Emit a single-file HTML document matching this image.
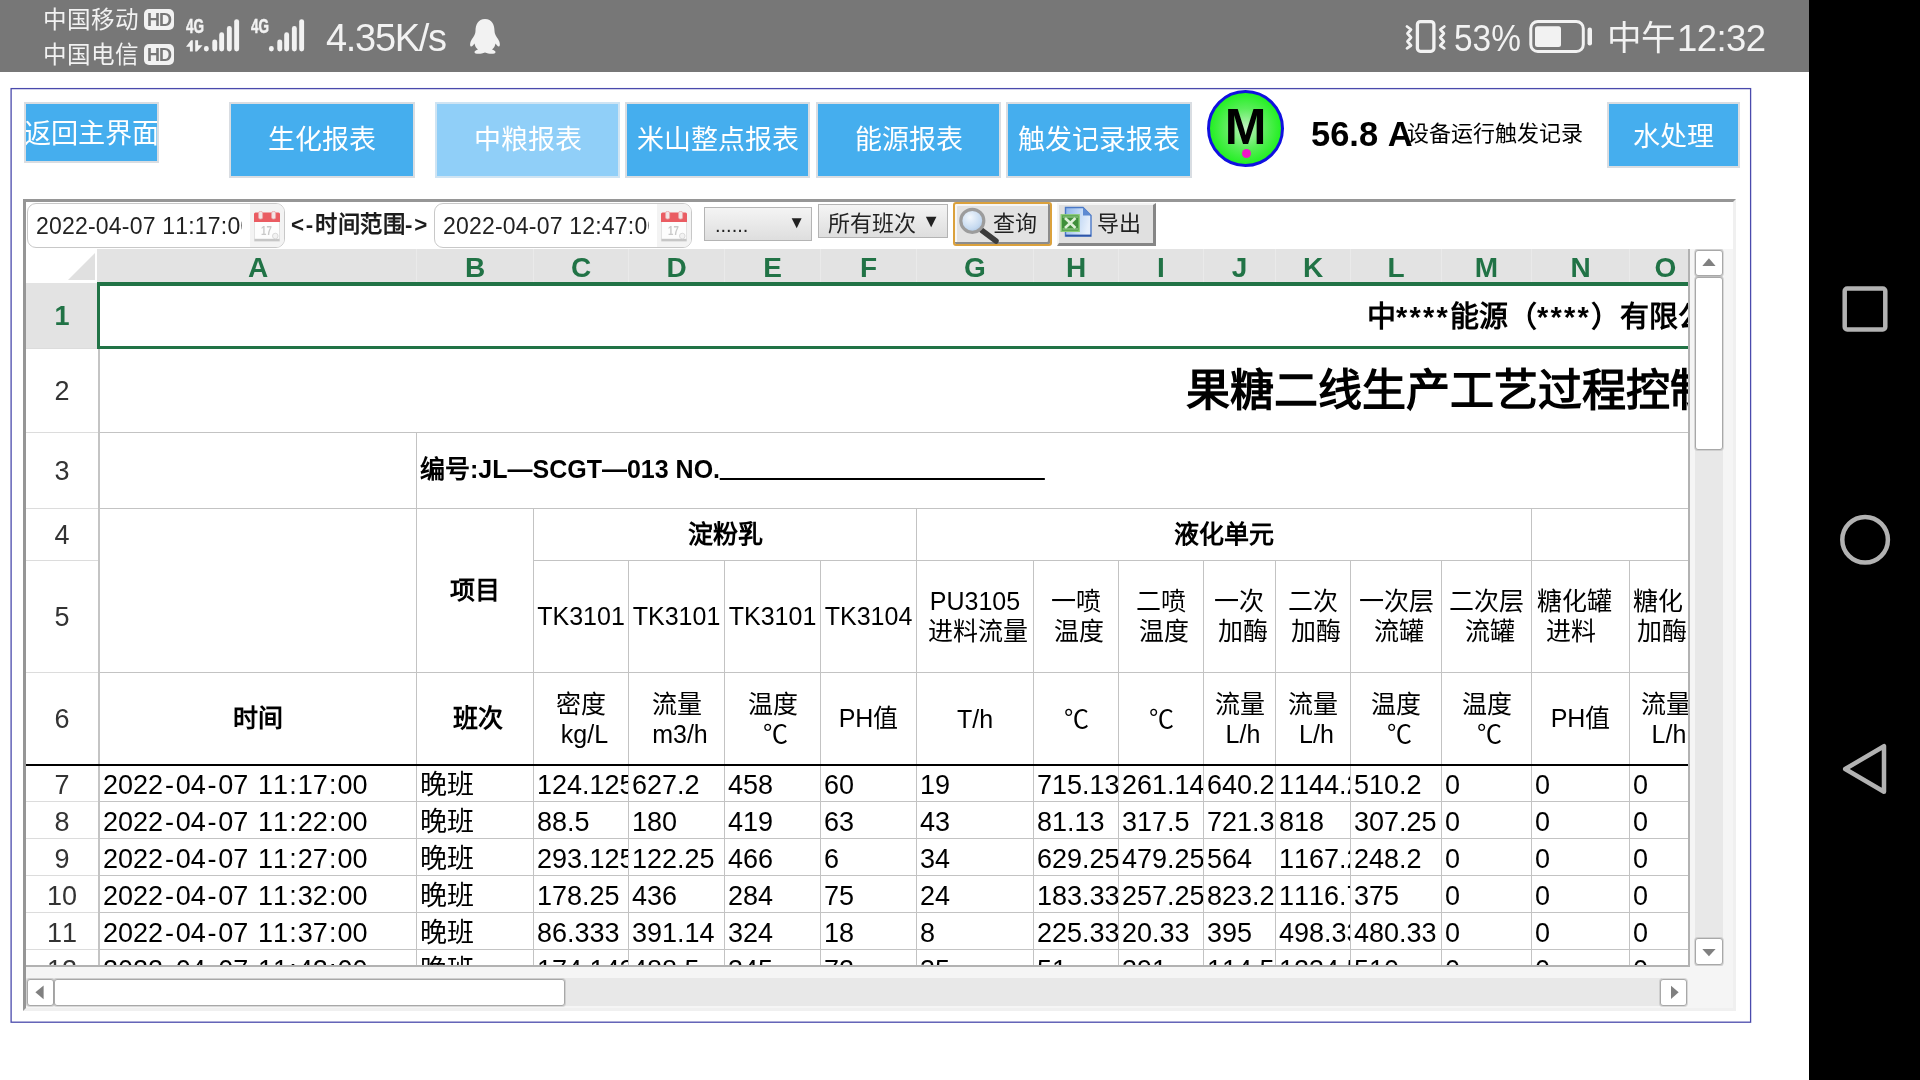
<!DOCTYPE html><html lang="zh-CN"><head><meta charset="utf-8"><title>report</title><style>
*{box-sizing:border-box}
html,body{margin:0;padding:0}
body{font-kerning:none;width:1920px;height:1080px;position:relative;overflow:hidden;background:#fff;will-change:transform;font-family:"Liberation Sans",sans-serif;color:#000}
.abs{position:absolute}
#status{left:0;top:0;width:1809px;height:72px;background:#777;color:#f2f2f2}
#nav{left:1809px;top:0;width:111px;height:1080px;background:#000}
#frame{left:10px;top:88px;width:1741px;height:935px;border:1px solid #5b5bd6}
.btn{background:#45aeee;border:2px solid #d9dde2;color:#fff;font-size:27px;display:flex;align-items:center;justify-content:center;padding-bottom:6px;text-align:center;white-space:nowrap;overflow:hidden}
#inner{left:23px;top:199px;width:1713px;height:812px;border-top:3px solid #969696;border-left:3px solid #969696;border-right:3px solid #f0f0f0;border-bottom:3px solid #f0f0f0}
.inp{height:45px;border:1px solid #c8c8c8;border-radius:9px;background:#fff;font-size:23px;line-height:44px;padding-left:8px;letter-spacing:0.2px;overflow:hidden;white-space:nowrap;color:#222}
#grid{left:26px;top:249px;width:1662px;height:716px;overflow:hidden;background:#fff}
.c{position:absolute;overflow:hidden;white-space:nowrap;font-size:27px;display:flex;align-items:center}
.hc{position:absolute;top:0;height:34px;background:#e3e3e3;color:#217346;font-weight:bold;font-size:28px;text-align:center;line-height:38px;border-right:1px solid #eaeaea}
.rh{position:absolute;left:0;width:72px;text-align:center;font-size:27px;color:#333;display:flex;align-items:center;justify-content:center}
.vl{position:absolute;width:1px;background:#c3c3c3}
.hl{position:absolute;height:1px;background:#c3c3c3}
.ctr{justify-content:center;text-align:center}
i{font-style:normal}
.hy{margin:0 1.8px}
.co{margin:0 1.1px}
.b{font-weight:bold}
.h2{font-size:25px;line-height:30px;white-space:normal}
</style></head><body>
<div id="status" class="abs">
<div class="abs" style="left:43px;top:6px;font-size:23.6px;line-height:28px;white-space:nowrap">中国移动</div>
<div class="abs" style="left:43px;top:41px;font-size:23.6px;line-height:28px;white-space:nowrap">中国电信</div>
<div class="abs" style="left:144px;top:9px;width:30px;height:21px;border-radius:5px;background:#f2f2f2;color:#777;font-size:18px;font-weight:bold;line-height:23px;text-align:center;letter-spacing:-1px">HD</div>
<div class="abs" style="left:144px;top:44px;width:30px;height:21px;border-radius:5px;background:#f2f2f2;color:#777;font-size:18px;font-weight:bold;line-height:23px;text-align:center;letter-spacing:-1px">HD</div>
<svg class="abs" style="left:186px;top:17px" width="56" height="38" viewBox="0 0 56 38"><text x="0" y="16.2" font-family="Liberation Sans" font-weight="bold" font-size="19.5" fill="#f2f2f2" stroke="#f2f2f2" stroke-width="0.5" textLength="18" lengthAdjust="spacingAndGlyphs">4G</text><path d="M6.8 23.3 L6.8 34.5 L3.9 34.5 L3.9 29.8 L0 29.8 L5 23.3 Z M9.2 34.5 L9.2 23.3 L12.1 23.3 L12.1 28.2 L16.6 28.2 L11 34.5Z" fill="#f2f2f2"/><rect x="17.9" y="29" width="4.9" height="5.5" rx="2.4" fill="#f2f2f2"/><rect x="26.3" y="22.6" width="4.9" height="11.9" rx="2.4" fill="#f2f2f2"/><rect x="33.2" y="15.3" width="4.9" height="19.2" rx="2.4" fill="#f2f2f2"/><rect x="40.9" y="9" width="4.9" height="25.5" rx="2.4" fill="#f2f2f2"/><rect x="48.2" y="2.2" width="4.9" height="32.3" rx="2.4" fill="#f2f2f2"/></svg>
<svg class="abs" style="left:251px;top:17px" width="56" height="38" viewBox="0 0 56 38"><text x="0" y="16.2" font-family="Liberation Sans" font-weight="bold" font-size="19.5" fill="#f2f2f2" stroke="#f2f2f2" stroke-width="0.5" textLength="18" lengthAdjust="spacingAndGlyphs">4G</text><rect x="17.9" y="29" width="4.9" height="5.5" rx="2.4" fill="#f2f2f2"/><rect x="26.3" y="22.6" width="4.9" height="11.9" rx="2.4" fill="#f2f2f2"/><rect x="33.2" y="15.3" width="4.9" height="19.2" rx="2.4" fill="#f2f2f2"/><rect x="40.9" y="9" width="4.9" height="25.5" rx="2.4" fill="#f2f2f2"/><rect x="48.2" y="2.2" width="4.9" height="32.3" rx="2.4" fill="#f2f2f2"/></svg>
<div class="abs" style="left:326px;top:15px;font-size:38px;line-height:46px;white-space:nowrap;letter-spacing:-1.3px;color:#f2f2f2">4.35K/s</div>
<svg class="abs" style="left:469px;top:19px" width="32" height="36" viewBox="0 0 32 36"><path d="M16 0 C9 0 6.5 6 6.5 12 C6.5 15 5 17 3 20 C1 23 0.5 27 2 27.5 C3 27.8 4.5 26 5.5 24.5 C6 27 7 29 9 30.5 C7 31.2 5.5 32 5.5 33.2 C5.5 35.2 12 35.2 16 33.5 C20 35.2 26.5 35.2 26.5 33.2 C26.5 32 25 31.2 23 30.5 C25 29 26 27 26.5 24.5 C27.5 26 29 27.8 30 27.5 C31.5 27 31 23 29 20 C27 17 25.5 15 25.5 12 C25.5 6 23 0 16 0Z" fill="#f2f2f2"/></svg>
<svg class="abs" style="left:1400px;top:16px" width="52" height="42" viewBox="0 0 52 42" fill="none" stroke="#f2f2f2" stroke-linejoin="round" stroke-linecap="round"><rect x="17.4" y="5.6" width="16.5" height="29.7" rx="3" stroke-width="3.3"/><path d="M7 10.5 L11 13.5 L7.5 17.5 L11 21.5 L7.5 25.5 L11 29.5 L7 32.3 M44.3 10.5 L40.3 13.5 L43.8 17.5 L40.3 21.5 L43.8 25.5 L40.3 29.5 L44.3 32.3" stroke-width="2.8"/></svg>
<div class="abs" style="left:1454px;top:16px;font-size:36.5px;line-height:46px;white-space:nowrap;transform:scaleX(.915);transform-origin:0 0;color:#f2f2f2">53%</div>
<svg class="abs" style="left:1526px;top:16px" width="70" height="42" viewBox="0 0 70 42"><rect x="4.8" y="5.5" width="52.5" height="30" rx="7" fill="none" stroke="#f2f2f2" stroke-width="3"/><rect x="9" y="10.2" width="26" height="20.8" rx="2.5" fill="#f2f2f2"/><rect x="61.5" y="11.5" width="4.5" height="18" rx="2.2" fill="#f2f2f2"/></svg>
<div class="abs" style="left:1607px;top:14.5px;line-height:48px;white-space:nowrap;color:#f2f2f2"><span style="font-size:34.5px;position:relative;top:-1px">中午</span><span style="font-size:36.5px;letter-spacing:-0.6px;margin-left:2px">12:32</span></div>
</div>
<div id="nav" class="abs">
<svg class="abs" style="left:0;top:0" width="111" height="1080" viewBox="0 0 111 1080" fill="none" stroke="#b2b2b2" stroke-width="4.5" stroke-linejoin="round"><rect x="35.7" y="288.5" width="40.6" height="41" rx="2.5"/><circle cx="56.1" cy="539.8" r="22.8"/><path d="M75 746.2 L75 791.8 L36.2 769 Z"/></svg>
</div>
<svg class="abs" style="left:0;top:0" width="1920" height="1080"><rect x="11.1" y="88.6" width="1739.5" height="933.6" fill="none" stroke="#4a4aac" stroke-width="1.3"/></svg>
<div class="abs btn" style="left:24px;top:102px;width:135px;height:61px;font-size:27.2px;padding-bottom:4px;"><span style="flex:none">返回主界面</span></div>
<div class="abs btn" style="left:229px;top:102px;width:186px;height:76px;"><span style="flex:none">生化报表</span></div>
<div class="abs btn" style="left:435px;top:102px;width:185px;height:76px;background:#90cff8;border-color:#cfe4f3;"><span style="flex:none">中粮报表</span></div>
<div class="abs btn" style="left:625px;top:102px;width:185px;height:76px;"><span style="flex:none">米山整点报表</span></div>
<div class="abs btn" style="left:816px;top:102px;width:185px;height:76px;"><span style="flex:none">能源报表</span></div>
<div class="abs btn" style="left:1006px;top:102px;width:186px;height:76px;"><span style="flex:none">触发记录报表</span></div>
<div class="abs btn" style="left:1607px;top:102px;width:133px;height:66px;padding-bottom:1px;"><span style="flex:none">水处理</span></div>
<div class="abs" style="left:1207px;top:90px;width:77px;height:77px;border-radius:50%;background:radial-gradient(circle at 50% 50%,#c4f2c4 0%,#5aee5a 40%,#1cf01c 75%);border:3.5px solid #1010e0"></div>
<div class="abs b" style="left:1207px;top:92px;width:77px;height:70px;font-size:50px;line-height:70px;text-align:center">M</div>
<div class="abs" style="left:1241.5px;top:148.5px;width:9px;height:9px;border-radius:50%;background:#f216c8"></div>
<div class="abs b" style="left:1311px;top:114px;font-size:34.5px;line-height:40px;white-space:nowrap">56.8 A</div>
<div class="abs" style="left:1407px;top:120px;font-size:22px;line-height:28px;white-space:nowrap">设备运行触发记录</div>
<div id="inner" class="abs"></div>
<div class="abs inp" style="left:27px;top:203px;width:258px">2022-04-07 11:17:00<div class="abs" style="right:0;top:0;width:34px;height:43px;background:#f3f3f3;border-left:8px solid #fff;box-sizing:content-box"></div><svg class="abs" style="right:4px;top:7px" width="26" height="31" viewBox="0 0 26 31"><rect x="0.5" y="10" width="25" height="20" fill="#fdfdfd" stroke="#e2e2e2"/><rect x="0.5" y="27.8" width="25" height="2.4" fill="#c6c6c6"/><path d="M0 3 a1.5 1.5 0 0 1 1.5 -1.5 h23 a1.5 1.5 0 0 1 1.5 1.5 v8 h-26z" fill="#ea5c62"/><rect x="4.6" y="0.4" width="4" height="7.6" rx="1.6" fill="#f3e6e6" stroke="#eaa6a8" stroke-width="0.8"/><rect x="17.6" y="0.4" width="4" height="7.6" rx="1.6" fill="#f3e6e6" stroke="#eaa6a8" stroke-width="0.8"/><text x="7" y="24" font-size="12" font-weight="bold" font-family="Liberation Sans" fill="#c9c9c9" textLength="11" lengthAdjust="spacingAndGlyphs">17</text><circle cx="21.3" cy="25" r="2.8" fill="#f2f2f2" stroke="#d6d6d6" stroke-width="0.9"/></svg></div>
<div class="abs b" style="left:291px;top:210px;font-size:22.3px;line-height:30px;white-space:nowrap;letter-spacing:0.5px;color:#1c1c1c"><span style="letter-spacing:1.8px">&lt;-</span>时间范围<span style="letter-spacing:1.8px">-&gt;</span></div>
<div class="abs inp" style="left:434px;top:203px;width:258px">2022-04-07 12:47:00<div class="abs" style="right:0;top:0;width:34px;height:43px;background:#f3f3f3;border-left:8px solid #fff;box-sizing:content-box"></div><svg class="abs" style="right:4px;top:7px" width="26" height="31" viewBox="0 0 26 31"><rect x="0.5" y="10" width="25" height="20" fill="#fdfdfd" stroke="#e2e2e2"/><rect x="0.5" y="27.8" width="25" height="2.4" fill="#c6c6c6"/><path d="M0 3 a1.5 1.5 0 0 1 1.5 -1.5 h23 a1.5 1.5 0 0 1 1.5 1.5 v8 h-26z" fill="#ea5c62"/><rect x="4.6" y="0.4" width="4" height="7.6" rx="1.6" fill="#f3e6e6" stroke="#eaa6a8" stroke-width="0.8"/><rect x="17.6" y="0.4" width="4" height="7.6" rx="1.6" fill="#f3e6e6" stroke="#eaa6a8" stroke-width="0.8"/><text x="7" y="24" font-size="12" font-weight="bold" font-family="Liberation Sans" fill="#c9c9c9" textLength="11" lengthAdjust="spacingAndGlyphs">17</text><circle cx="21.3" cy="25" r="2.8" fill="#f2f2f2" stroke="#d6d6d6" stroke-width="0.9"/></svg></div>
<div class="abs" style="left:704px;top:207px;width:108px;height:34px;background:linear-gradient(#f4f4f4,#dedede);border:1px solid #b4b4b4;font-size:20px;line-height:34px;padding-left:10px;color:#222">......<span class="abs" style="right:6px;top:-2px;font-size:17px">&#9660;</span></div>
<div class="abs" style="left:818px;top:204px;width:130px;height:34px;background:linear-gradient(#f4f4f4,#dedede);border:1px solid #b4b4b4;font-size:22px;line-height:32px;padding-top:2.5px;padding-left:9px;color:#222;white-space:nowrap">所有班次<span class="abs" style="right:7px;top:0px;font-size:18px">&#9660;</span></div>
<div class="abs" style="left:953px;top:202px;width:99px;height:44px;background:#e2e2e2;border:2px solid #dba13c;border-radius:3px;box-shadow:inset -2px -2px 0 #8c8c8c, inset 2px 2px 0 #f6f6f6"></div>
<svg class="abs" style="left:957px;top:205px" width="42" height="40" viewBox="0 0 42 40"><defs><radialGradient id="lg" cx="0.4" cy="0.35" r="0.7"><stop offset="0" stop-color="#f2f7fc"/><stop offset="0.7" stop-color="#c6daf0"/><stop offset="1" stop-color="#aac4e2"/></radialGradient></defs><line x1="25" y1="25.5" x2="39" y2="36" stroke="#3c3c3c" stroke-width="5.5" stroke-linecap="round"/><circle cx="15.3" cy="15.8" r="11.5" fill="url(#lg)" stroke="#9c9c9c" stroke-width="3.2"/></svg>
<div class="abs" style="left:993px;top:209px;font-size:22px;line-height:30px;color:#222;white-space:nowrap">查询</div>
<div class="abs" style="left:1057px;top:203px;width:99px;height:43px;background:#e0e0e0;border-style:solid;border-width:2px 3px 3px 2px;border-color:#f4f4f4 #868686 #868686 #f4f4f4"></div>
<svg class="abs" style="left:1060px;top:205px" width="34" height="34" viewBox="0 0 34 34"><defs><linearGradient id="dg" x1="0" y1="0" x2="1" y2="0.3"><stop offset="0" stop-color="#8db3ea"/><stop offset="0.6" stop-color="#c5daf5"/><stop offset="1" stop-color="#e6effb"/></linearGradient></defs><path d="M5.5 2.5 h17.5 l8 8 v20.5 h-25.5z" fill="url(#dg)" stroke="#4a78c6" stroke-width="1.4"/><path d="M23 2.5 v8 h8z" fill="#5c8ad2"/><path d="M5.5 30.5 h25.5" stroke="#2e55a8" stroke-width="1.8"/><rect x="1.2" y="9.8" width="18" height="16.5" fill="#3f8f3a" stroke="#8ccc78" stroke-width="1.4"/><path d="M5 13 L15.5 23 M15.5 13 L5 23" stroke="#dff0d8" stroke-width="2.6"/><path d="M2.5 12 h15.5 M2.5 24 h15.5" stroke="#a8d89a" stroke-width="1"/></svg>
<div class="abs" style="left:1097px;top:209px;font-size:22px;line-height:30px;color:#222;white-space:nowrap">导出</div>
<div id="grid" class="abs">
<div class="abs" style="left:71px;top:0;width:1592px;height:34px;background:#e3e3e3"></div>
<div class="hc" style="left:74px;width:317px">A</div>
<div class="hc" style="left:391px;width:117px">B</div>
<div class="hc" style="left:508px;width:95px">C</div>
<div class="hc" style="left:603px;width:96px">D</div>
<div class="hc" style="left:699px;width:96px">E</div>
<div class="hc" style="left:795px;width:96px">F</div>
<div class="hc" style="left:891px;width:117px">G</div>
<div class="hc" style="left:1008px;width:85px">H</div>
<div class="hc" style="left:1093px;width:85px">I</div>
<div class="hc" style="left:1178px;width:72px">J</div>
<div class="hc" style="left:1250px;width:75px">K</div>
<div class="hc" style="left:1325px;width:91px">L</div>
<div class="hc" style="left:1416px;width:90px">M</div>
<div class="hc" style="left:1506px;width:98px">N</div>
<div class="hc" style="left:1604px;width:72px">O</div>
<svg class="abs" style="left:0;top:0" width="71" height="34" viewBox="0 0 71 34"><path d="M69 4 L69 31 L42 31Z" fill="#e0e0e0"/></svg>
<div class="rh" style="top:34px;height:66px;background:#e3e3e3;color:#217346;font-weight:bold;">1</div>
<div class="hl" style="left:0;top:99px;width:72px;background:#dcdcdc"></div>
<div class="rh" style="top:100px;height:84px;">2</div>
<div class="hl" style="left:0;top:183px;width:72px;background:#dcdcdc"></div>
<div class="rh" style="top:184px;height:76px;">3</div>
<div class="hl" style="left:0;top:259px;width:72px;background:#dcdcdc"></div>
<div class="rh" style="top:260px;height:52px;">4</div>
<div class="hl" style="left:0;top:311px;width:72px;background:#dcdcdc"></div>
<div class="rh" style="top:312px;height:112px;">5</div>
<div class="hl" style="left:0;top:423px;width:72px;background:#dcdcdc"></div>
<div class="rh" style="top:424px;height:92px;">6</div>
<div class="hl" style="left:0;top:515px;width:72px;background:#dcdcdc"></div>
<div class="rh" style="top:516px;height:37px;padding-top:3px;">7</div>
<div class="hl" style="left:0;top:552px;width:72px;background:#dcdcdc"></div>
<div class="rh" style="top:553px;height:37px;padding-top:3px;">8</div>
<div class="hl" style="left:0;top:589px;width:72px;background:#dcdcdc"></div>
<div class="rh" style="top:590px;height:37px;padding-top:3px;">9</div>
<div class="hl" style="left:0;top:626px;width:72px;background:#dcdcdc"></div>
<div class="rh" style="top:627px;height:37px;padding-top:3px;">10</div>
<div class="hl" style="left:0;top:663px;width:72px;background:#dcdcdc"></div>
<div class="rh" style="top:664px;height:37px;padding-top:3px;">11</div>
<div class="hl" style="left:0;top:700px;width:72px;background:#dcdcdc"></div>
<div class="rh" style="top:701px;height:37px;padding-top:3px;">12</div>
<div class="hl" style="left:0;top:737px;width:72px;background:#dcdcdc"></div>
<div class="vl" style="left:72px;top:34px;height:700px;width:2px;background:#c4c4c4"></div>
<div class="hl" style="left:73px;top:183px;width:1603px;height:1px;"></div>
<div class="hl" style="left:73px;top:259px;width:1603px;height:1px;"></div>
<div class="hl" style="left:507px;top:311px;width:1169px;height:1px;"></div>
<div class="hl" style="left:73px;top:423px;width:1603px;height:1px;"></div>
<div class="hl" style="left:73px;top:552px;width:1603px;height:1px;"></div>
<div class="hl" style="left:73px;top:589px;width:1603px;height:1px;"></div>
<div class="hl" style="left:73px;top:626px;width:1603px;height:1px;"></div>
<div class="hl" style="left:73px;top:663px;width:1603px;height:1px;"></div>
<div class="hl" style="left:73px;top:700px;width:1603px;height:1px;"></div>
<div class="hl" style="left:73px;top:737px;width:1603px;height:1px;"></div>
<div class="vl" style="left:390px;top:183px;height:555px"></div>
<div class="vl" style="left:507px;top:259px;height:479px"></div>
<div class="vl" style="left:602px;top:311px;height:427px"></div>
<div class="vl" style="left:698px;top:311px;height:427px"></div>
<div class="vl" style="left:794px;top:311px;height:427px"></div>
<div class="vl" style="left:890px;top:259px;height:479px"></div>
<div class="vl" style="left:1007px;top:311px;height:427px"></div>
<div class="vl" style="left:1092px;top:311px;height:427px"></div>
<div class="vl" style="left:1177px;top:311px;height:427px"></div>
<div class="vl" style="left:1249px;top:311px;height:427px"></div>
<div class="vl" style="left:1324px;top:311px;height:427px"></div>
<div class="vl" style="left:1415px;top:311px;height:427px"></div>
<div class="vl" style="left:1505px;top:259px;height:479px"></div>
<div class="vl" style="left:1603px;top:311px;height:427px"></div>
<div class="c b" style="left:74px;top:34px;width:1601px;height:65px;font-size:29px;"><span style="position:absolute;left:1267px;top:10px">中<span style="letter-spacing:2.2px">****</span>能源（<span style="letter-spacing:2.2px">****</span>）有限公司</span></div>
<div class="c b" style="left:74px;top:100px;width:1601px;height:83px;font-size:44px;"><span style="position:absolute;left:1086px;top:6px">果糖二线生产工艺过程控制记录</span></div>
<div class="c b" style="left:391px;top:184px;width:1284px;height:75px;font-size:25px;padding-left:3px;padding-bottom:7px;">编号:JL—SCGT—013 NO.<span style="letter-spacing:-0.4px;text-shadow:0 0.8px 0 #000">________________________</span></div>
<div class="c b ctr" style="left:391px;top:260px;width:116px;height:163px;font-size:25px;padding-bottom:6px;">项目</div>
<div class="c b ctr" style="left:508px;top:260px;width:382px;height:51px;font-size:25px;padding-bottom:6px;">淀粉乳</div>
<div class="c b ctr" style="left:891px;top:260px;width:614px;height:51px;font-size:25px;padding-bottom:6px;">液化单元</div>
<div class="c ctr h2" style="left:508px;top:312px;width:94px;height:111px;padding-bottom:2px;"><span>TK3101</span></div>
<div class="c ctr h2" style="left:603px;top:312px;width:95px;height:111px;padding-bottom:2px;"><span>TK3101</span></div>
<div class="c ctr h2" style="left:699px;top:312px;width:95px;height:111px;padding-bottom:2px;"><span>TK3101</span></div>
<div class="c ctr h2" style="left:795px;top:312px;width:95px;height:111px;padding-bottom:2px;"><span>TK3104</span></div>
<div class="c ctr h2" style="left:891px;top:312px;width:116px;height:111px;padding-bottom:2px;"><span>PU3105<br>&nbsp;进料流量</span></div>
<div class="c ctr h2" style="left:1008px;top:312px;width:84px;height:111px;padding-bottom:2px;"><span>一喷<br>&nbsp;温度</span></div>
<div class="c ctr h2" style="left:1093px;top:312px;width:84px;height:111px;padding-bottom:2px;"><span>二喷<br>&nbsp;温度</span></div>
<div class="c ctr h2" style="left:1178px;top:312px;width:71px;height:111px;padding-bottom:2px;"><span>一次<br>&nbsp;加酶</span></div>
<div class="c ctr h2" style="left:1250px;top:312px;width:74px;height:111px;padding-bottom:2px;"><span>二次<br>&nbsp;加酶</span></div>
<div class="c ctr h2" style="left:1325px;top:312px;width:90px;height:111px;padding-bottom:2px;"><span>一次层<br>&nbsp;流罐</span></div>
<div class="c ctr h2" style="left:1416px;top:312px;width:89px;height:111px;padding-bottom:2px;"><span>二次层<br>&nbsp;流罐</span></div>
<div class="c ctr h2" style="left:1506px;top:312px;width:97px;height:111px;padding-bottom:2px;padding-right:12px;"><span>糖化罐<br>进料&nbsp;</span></div>
<div class="c ctr h2" style="left:1604px;top:312px;width:71px;height:111px;padding-bottom:2px;padding-right:14px;"><span>糖化<br>&nbsp;加酶</span></div>
<div class="c b ctr" style="left:74px;top:424px;width:316px;height:91px;font-size:25px;padding-bottom:5px;">时间</div>
<div class="c b ctr" style="left:391px;top:424px;width:116px;height:91px;font-size:25px;padding-left:6px;padding-bottom:5px;">班次</div>
<div class="c ctr h2" style="left:508px;top:424px;width:94px;height:91px;"><span>密度<br>&nbsp;kg/L</span></div>
<div class="c ctr h2" style="left:603px;top:424px;width:95px;height:91px;"><span>流量<br>&nbsp;m3/h</span></div>
<div class="c ctr h2" style="left:699px;top:424px;width:95px;height:91px;"><span>温度<br>&nbsp;℃</span></div>
<div class="c ctr h2" style="left:795px;top:424px;width:95px;height:91px;padding-bottom:2px;"><span>PH值</span></div>
<div class="c ctr h2" style="left:891px;top:424px;width:116px;height:91px;"><span>T/h</span></div>
<div class="c ctr h2" style="left:1008px;top:424px;width:84px;height:91px;"><span>℃</span></div>
<div class="c ctr h2" style="left:1093px;top:424px;width:84px;height:91px;"><span>℃</span></div>
<div class="c ctr h2" style="left:1178px;top:424px;width:71px;height:91px;"><span>流量<br>&nbsp;L/h</span></div>
<div class="c ctr h2" style="left:1250px;top:424px;width:74px;height:91px;"><span>流量<br>&nbsp;L/h</span></div>
<div class="c ctr h2" style="left:1325px;top:424px;width:90px;height:91px;"><span>温度<br>&nbsp;℃</span></div>
<div class="c ctr h2" style="left:1416px;top:424px;width:89px;height:91px;"><span>温度<br>&nbsp;℃</span></div>
<div class="c ctr h2" style="left:1506px;top:424px;width:97px;height:91px;padding-bottom:2px;"><span>PH值</span></div>
<div class="c ctr h2" style="left:1604px;top:424px;width:71px;height:91px;"><span>流量<br>&nbsp;L/h</span></div>
<div class="hl" style="left:0;top:515px;width:1663px;height:2px;background:#000"></div>
<div class="c " style="left:74px;top:516px;width:316px;height:36px;padding-left:3px;padding-top:4px;word-spacing:2.2px;">2022<i class="hy">-</i>04<i class="hy">-</i>07 11<i class="co">:</i>17<i class="co">:</i>00</div>
<div class="c " style="left:391px;top:516px;width:116px;height:36px;padding-left:3px;padding-bottom:2px;">晚班</div>
<div class="c " style="left:508px;top:516px;width:94px;height:36px;padding-left:3px;padding-top:4px;">124.125</div>
<div class="c " style="left:603px;top:516px;width:95px;height:36px;padding-left:3px;padding-top:4px;">627.2</div>
<div class="c " style="left:699px;top:516px;width:95px;height:36px;padding-left:3px;padding-top:4px;">458</div>
<div class="c " style="left:795px;top:516px;width:95px;height:36px;padding-left:3px;padding-top:4px;">60</div>
<div class="c " style="left:891px;top:516px;width:116px;height:36px;padding-left:3px;padding-top:4px;">19</div>
<div class="c " style="left:1008px;top:516px;width:84px;height:36px;padding-left:3px;padding-top:4px;">715.13</div>
<div class="c " style="left:1093px;top:516px;width:84px;height:36px;padding-left:3px;padding-top:4px;">261.14</div>
<div class="c " style="left:1178px;top:516px;width:71px;height:36px;padding-left:3px;padding-top:4px;">640.2</div>
<div class="c " style="left:1250px;top:516px;width:74px;height:36px;padding-left:3px;padding-top:4px;">1144.2</div>
<div class="c " style="left:1325px;top:516px;width:90px;height:36px;padding-left:3px;padding-top:4px;">510.2</div>
<div class="c " style="left:1416px;top:516px;width:89px;height:36px;padding-left:3px;padding-top:4px;">0</div>
<div class="c " style="left:1506px;top:516px;width:97px;height:36px;padding-left:3px;padding-top:4px;">0</div>
<div class="c " style="left:1604px;top:516px;width:71px;height:36px;padding-left:3px;padding-top:4px;">0</div>
<div class="c " style="left:74px;top:553px;width:316px;height:36px;padding-left:3px;padding-top:4px;word-spacing:2.2px;">2022<i class="hy">-</i>04<i class="hy">-</i>07 11<i class="co">:</i>22<i class="co">:</i>00</div>
<div class="c " style="left:391px;top:553px;width:116px;height:36px;padding-left:3px;padding-bottom:2px;">晚班</div>
<div class="c " style="left:508px;top:553px;width:94px;height:36px;padding-left:3px;padding-top:4px;">88.5</div>
<div class="c " style="left:603px;top:553px;width:95px;height:36px;padding-left:3px;padding-top:4px;">180</div>
<div class="c " style="left:699px;top:553px;width:95px;height:36px;padding-left:3px;padding-top:4px;">419</div>
<div class="c " style="left:795px;top:553px;width:95px;height:36px;padding-left:3px;padding-top:4px;">63</div>
<div class="c " style="left:891px;top:553px;width:116px;height:36px;padding-left:3px;padding-top:4px;">43</div>
<div class="c " style="left:1008px;top:553px;width:84px;height:36px;padding-left:3px;padding-top:4px;">81.13</div>
<div class="c " style="left:1093px;top:553px;width:84px;height:36px;padding-left:3px;padding-top:4px;">317.5</div>
<div class="c " style="left:1178px;top:553px;width:71px;height:36px;padding-left:3px;padding-top:4px;">721.3</div>
<div class="c " style="left:1250px;top:553px;width:74px;height:36px;padding-left:3px;padding-top:4px;">818</div>
<div class="c " style="left:1325px;top:553px;width:90px;height:36px;padding-left:3px;padding-top:4px;">307.25</div>
<div class="c " style="left:1416px;top:553px;width:89px;height:36px;padding-left:3px;padding-top:4px;">0</div>
<div class="c " style="left:1506px;top:553px;width:97px;height:36px;padding-left:3px;padding-top:4px;">0</div>
<div class="c " style="left:1604px;top:553px;width:71px;height:36px;padding-left:3px;padding-top:4px;">0</div>
<div class="c " style="left:74px;top:590px;width:316px;height:36px;padding-left:3px;padding-top:4px;word-spacing:2.2px;">2022<i class="hy">-</i>04<i class="hy">-</i>07 11<i class="co">:</i>27<i class="co">:</i>00</div>
<div class="c " style="left:391px;top:590px;width:116px;height:36px;padding-left:3px;padding-bottom:2px;">晚班</div>
<div class="c " style="left:508px;top:590px;width:94px;height:36px;padding-left:3px;padding-top:4px;">293.125</div>
<div class="c " style="left:603px;top:590px;width:95px;height:36px;padding-left:3px;padding-top:4px;">122.25</div>
<div class="c " style="left:699px;top:590px;width:95px;height:36px;padding-left:3px;padding-top:4px;">466</div>
<div class="c " style="left:795px;top:590px;width:95px;height:36px;padding-left:3px;padding-top:4px;">6</div>
<div class="c " style="left:891px;top:590px;width:116px;height:36px;padding-left:3px;padding-top:4px;">34</div>
<div class="c " style="left:1008px;top:590px;width:84px;height:36px;padding-left:3px;padding-top:4px;">629.25</div>
<div class="c " style="left:1093px;top:590px;width:84px;height:36px;padding-left:3px;padding-top:4px;">479.25</div>
<div class="c " style="left:1178px;top:590px;width:71px;height:36px;padding-left:3px;padding-top:4px;">564</div>
<div class="c " style="left:1250px;top:590px;width:74px;height:36px;padding-left:3px;padding-top:4px;">1167.2</div>
<div class="c " style="left:1325px;top:590px;width:90px;height:36px;padding-left:3px;padding-top:4px;">248.2</div>
<div class="c " style="left:1416px;top:590px;width:89px;height:36px;padding-left:3px;padding-top:4px;">0</div>
<div class="c " style="left:1506px;top:590px;width:97px;height:36px;padding-left:3px;padding-top:4px;">0</div>
<div class="c " style="left:1604px;top:590px;width:71px;height:36px;padding-left:3px;padding-top:4px;">0</div>
<div class="c " style="left:74px;top:627px;width:316px;height:36px;padding-left:3px;padding-top:4px;word-spacing:2.2px;">2022<i class="hy">-</i>04<i class="hy">-</i>07 11<i class="co">:</i>32<i class="co">:</i>00</div>
<div class="c " style="left:391px;top:627px;width:116px;height:36px;padding-left:3px;padding-bottom:2px;">晚班</div>
<div class="c " style="left:508px;top:627px;width:94px;height:36px;padding-left:3px;padding-top:4px;">178.25</div>
<div class="c " style="left:603px;top:627px;width:95px;height:36px;padding-left:3px;padding-top:4px;">436</div>
<div class="c " style="left:699px;top:627px;width:95px;height:36px;padding-left:3px;padding-top:4px;">284</div>
<div class="c " style="left:795px;top:627px;width:95px;height:36px;padding-left:3px;padding-top:4px;">75</div>
<div class="c " style="left:891px;top:627px;width:116px;height:36px;padding-left:3px;padding-top:4px;">24</div>
<div class="c " style="left:1008px;top:627px;width:84px;height:36px;padding-left:3px;padding-top:4px;">183.33</div>
<div class="c " style="left:1093px;top:627px;width:84px;height:36px;padding-left:3px;padding-top:4px;">257.25</div>
<div class="c " style="left:1178px;top:627px;width:71px;height:36px;padding-left:3px;padding-top:4px;">823.2</div>
<div class="c " style="left:1250px;top:627px;width:74px;height:36px;padding-left:3px;padding-top:4px;">1116.7</div>
<div class="c " style="left:1325px;top:627px;width:90px;height:36px;padding-left:3px;padding-top:4px;">375</div>
<div class="c " style="left:1416px;top:627px;width:89px;height:36px;padding-left:3px;padding-top:4px;">0</div>
<div class="c " style="left:1506px;top:627px;width:97px;height:36px;padding-left:3px;padding-top:4px;">0</div>
<div class="c " style="left:1604px;top:627px;width:71px;height:36px;padding-left:3px;padding-top:4px;">0</div>
<div class="c " style="left:74px;top:664px;width:316px;height:36px;padding-left:3px;padding-top:4px;word-spacing:2.2px;">2022<i class="hy">-</i>04<i class="hy">-</i>07 11<i class="co">:</i>37<i class="co">:</i>00</div>
<div class="c " style="left:391px;top:664px;width:116px;height:36px;padding-left:3px;padding-bottom:2px;">晚班</div>
<div class="c " style="left:508px;top:664px;width:94px;height:36px;padding-left:3px;padding-top:4px;">86.333</div>
<div class="c " style="left:603px;top:664px;width:95px;height:36px;padding-left:3px;padding-top:4px;">391.14</div>
<div class="c " style="left:699px;top:664px;width:95px;height:36px;padding-left:3px;padding-top:4px;">324</div>
<div class="c " style="left:795px;top:664px;width:95px;height:36px;padding-left:3px;padding-top:4px;">18</div>
<div class="c " style="left:891px;top:664px;width:116px;height:36px;padding-left:3px;padding-top:4px;">8</div>
<div class="c " style="left:1008px;top:664px;width:84px;height:36px;padding-left:3px;padding-top:4px;">225.33</div>
<div class="c " style="left:1093px;top:664px;width:84px;height:36px;padding-left:3px;padding-top:4px;">20.33</div>
<div class="c " style="left:1178px;top:664px;width:71px;height:36px;padding-left:3px;padding-top:4px;">395</div>
<div class="c " style="left:1250px;top:664px;width:74px;height:36px;padding-left:3px;padding-top:4px;">498.33</div>
<div class="c " style="left:1325px;top:664px;width:90px;height:36px;padding-left:3px;padding-top:4px;">480.33</div>
<div class="c " style="left:1416px;top:664px;width:89px;height:36px;padding-left:3px;padding-top:4px;">0</div>
<div class="c " style="left:1506px;top:664px;width:97px;height:36px;padding-left:3px;padding-top:4px;">0</div>
<div class="c " style="left:1604px;top:664px;width:71px;height:36px;padding-left:3px;padding-top:4px;">0</div>
<div class="c " style="left:74px;top:701px;width:316px;height:36px;padding-left:3px;padding-top:4px;word-spacing:2.2px;">2022<i class="hy">-</i>04<i class="hy">-</i>07 11<i class="co">:</i>42<i class="co">:</i>00</div>
<div class="c " style="left:391px;top:701px;width:116px;height:36px;padding-left:3px;padding-bottom:2px;">晚班</div>
<div class="c " style="left:508px;top:701px;width:94px;height:36px;padding-left:3px;padding-top:4px;">174.143</div>
<div class="c " style="left:603px;top:701px;width:95px;height:36px;padding-left:3px;padding-top:4px;">488.5</div>
<div class="c " style="left:699px;top:701px;width:95px;height:36px;padding-left:3px;padding-top:4px;">345</div>
<div class="c " style="left:795px;top:701px;width:95px;height:36px;padding-left:3px;padding-top:4px;">72</div>
<div class="c " style="left:891px;top:701px;width:116px;height:36px;padding-left:3px;padding-top:4px;">35</div>
<div class="c " style="left:1008px;top:701px;width:84px;height:36px;padding-left:3px;padding-top:4px;">51</div>
<div class="c " style="left:1093px;top:701px;width:84px;height:36px;padding-left:3px;padding-top:4px;">391</div>
<div class="c " style="left:1178px;top:701px;width:71px;height:36px;padding-left:3px;padding-top:4px;">114.5</div>
<div class="c " style="left:1250px;top:701px;width:74px;height:36px;padding-left:3px;padding-top:4px;">1234.5</div>
<div class="c " style="left:1325px;top:701px;width:90px;height:36px;padding-left:3px;padding-top:4px;">510</div>
<div class="c " style="left:1416px;top:701px;width:89px;height:36px;padding-left:3px;padding-top:4px;">0</div>
<div class="c " style="left:1506px;top:701px;width:97px;height:36px;padding-left:3px;padding-top:4px;">0</div>
<div class="c " style="left:1604px;top:701px;width:71px;height:36px;padding-left:3px;padding-top:4px;">0</div>
<div class="abs" style="left:71px;top:34px;width:1700px;height:66px;border:3px solid #217346"></div>
<div class="abs" style="left:71px;top:33px;width:1700px;height:3px;background:#217346"></div>
</div>
<div class="abs" style="left:1688px;top:249px;width:2px;height:718px;background:#b2b2b2"></div>
<div class="abs" style="left:26px;top:965px;width:1664px;height:2px;background:#b2b2b2"></div>
<div class="abs" style="left:1690px;top:249px;width:43px;height:718px;background:#f5f5f5"></div>
<div class="abs" style="left:1695px;top:249px;width:28px;height:717px;background:#e8e8e8"></div>
<div class="abs" style="left:26px;top:967px;width:1707px;height:41px;background:#f5f5f5"></div>
<div class="abs" style="left:26px;top:978px;width:1636px;height:28px;background:#e8e8e8"></div>
<div class="abs" style="left:1695px;top:250px;width:28px;height:26px;background:#fff;border:1px solid #a8a8a8;border-radius:3px;box-shadow:0 0 0 1px rgba(150,150,150,.3);"></div>
<div class="abs" style="left:1695px;top:277px;width:28px;height:173px;background:#fff;border:1px solid #a8a8a8;border-radius:3px;box-shadow:0 0 0 1px rgba(150,150,150,.3);"></div>
<div class="abs" style="left:1695px;top:938px;width:28px;height:27px;background:#fff;border:1px solid #a8a8a8;border-radius:3px;box-shadow:0 0 0 1px rgba(150,150,150,.3);"></div>
<div class="abs" style="left:27px;top:979px;width:27px;height:27px;background:#fff;border:1px solid #a8a8a8;border-radius:3px;box-shadow:0 0 0 1px rgba(150,150,150,.3);"></div>
<div class="abs" style="left:54px;top:979px;width:511px;height:27px;background:#fff;border:1px solid #a8a8a8;border-radius:3px;box-shadow:0 0 0 1px rgba(150,150,150,.3);"></div>
<div class="abs" style="left:1660px;top:979px;width:27px;height:27px;background:#fff;border:1px solid #a8a8a8;border-radius:3px;box-shadow:0 0 0 1px rgba(150,150,150,.3);"></div>
<svg class="abs" style="left:0;top:0;pointer-events:none" width="1920" height="1080" viewBox="0 0 1920 1080" fill="#808080"><path d="M1702.3 265.9 h13.3 l-6.65 -7.6z"/><path d="M1702.3 949 h13.3 l-6.65 7.2z"/><path d="M43.6 985.5 v13.7 l-8.2 -6.85z"/><path d="M1671 985.7 v13.3 l7.7 -6.65z"/></svg>
</body></html>
